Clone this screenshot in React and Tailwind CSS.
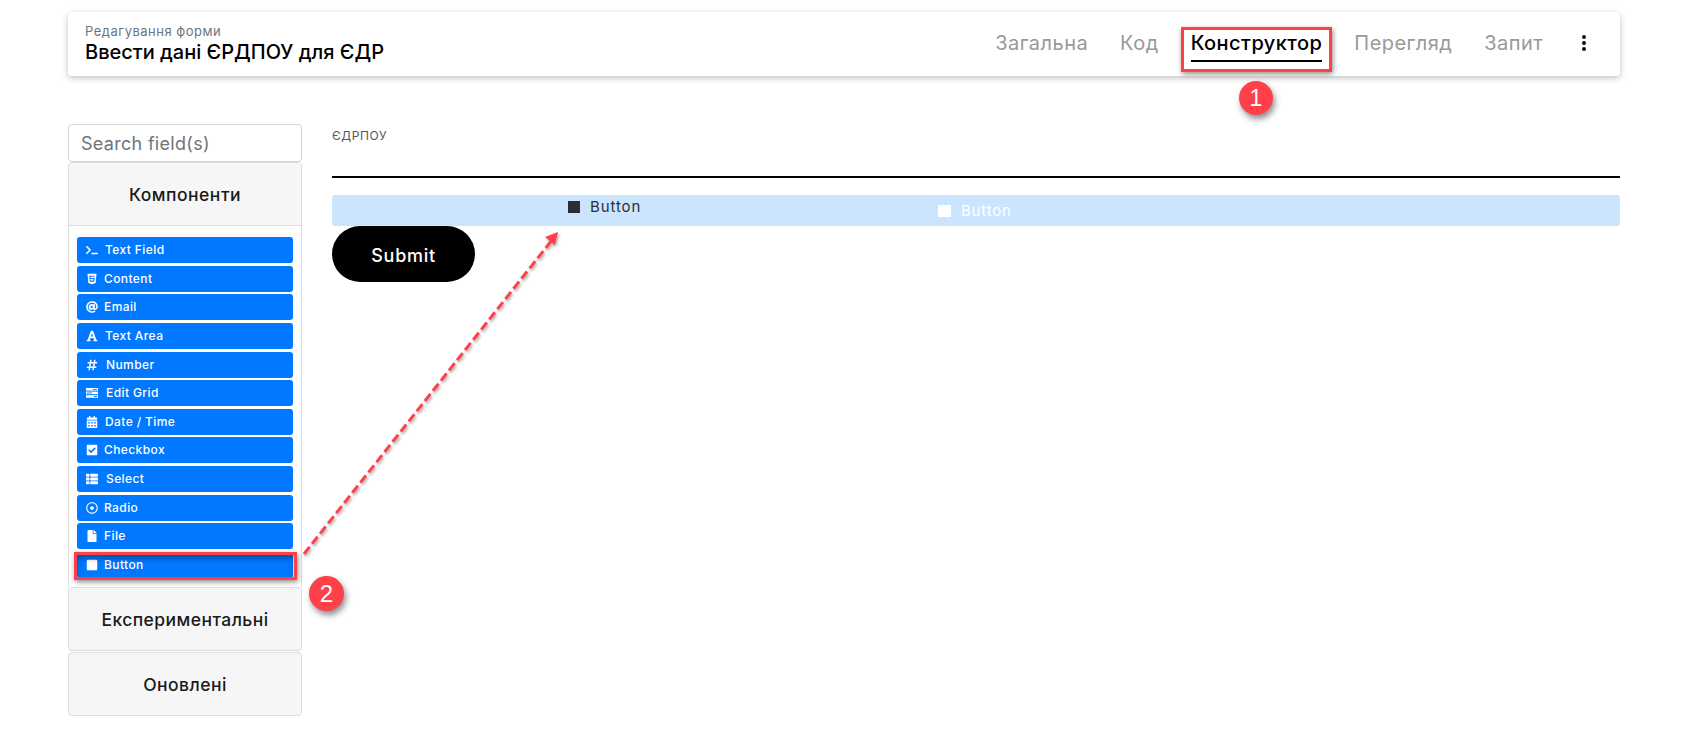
import React from "react";
import { FaTerminal, FaHtml5, FaAt, FaFont, FaHashtag, FaCalendarAlt, FaCheckSquare, FaThList, FaRegDotCircle, FaFile, FaStop } from "react-icons/fa";

function GridIcon() {
  return (
    <svg width="12" height="10" viewBox="0 0 12 10" fill="white">
      <rect x="0" y="0" width="12" height="2.6" />
      <rect x="0" y="3.6" width="12" height="2.6" />
      <rect x="0" y="7.2" width="12" height="2.6" />
      <rect x="7" y="0.9" width="4" height="0.9" fill="#0078ff" />
      <rect x="1" y="4.5" width="5" height="0.9" fill="#0078ff" />
      <rect x="8" y="8.1" width="3" height="0.9" fill="#0078ff" />
    </svg>
  );
}

const items = [
  { label: "Text Field", Icon: FaTerminal, gap: "ml-[7px]" },
  { label: "Content", Icon: FaHtml5, gap: "ml-[6px]" },
  { label: "Email", Icon: FaAt, gap: "ml-[6px]" },
  { label: "Text Area", Icon: FaFont, gap: "ml-[7px]" },
  { label: "Number", Icon: FaHashtag, gap: "ml-[8px]" },
  { label: "Edit Grid", Icon: GridIcon, gap: "ml-[8px]" },
  { label: "Date / Time", Icon: FaCalendarAlt, gap: "ml-[7px]" },
  { label: "Checkbox", Icon: FaCheckSquare, gap: "ml-[6px]" },
  { label: "Select", Icon: FaThList, gap: "ml-[8px]" },
  { label: "Radio", Icon: FaRegDotCircle, gap: "ml-[6px]" },
  { label: "File", Icon: FaFile, gap: "ml-[6px]" },
  { label: "Button", Icon: FaStop, gap: "ml-[6px]" },
];

const tabs = [
  { label: "Загальна" },
  { label: "Код" },
  { label: "Конструктор", active: true },
  { label: "Перегляд" },
  { label: "Запит" },
];

function Badge({ n, className }) {
  return (
    <div className={"absolute flex items-center justify-center rounded-full bg-[#ff4049] text-white font-['Liberation_Sans',sans-serif] shadow-[2px_4px_6px_rgba(0,0,0,0.45)] " + className}>
      {n}
    </div>
  );
}

export default function App() {
  return (
    <div className="relative h-[740px] w-[1687px] overflow-hidden bg-white pl-[68px] pr-[67px] pt-[12px] font-['Inter',sans-serif]">
      <header className="flex h-[64px] justify-between rounded bg-white pl-[17px] pr-[33px] shadow-[0_2px_6px_rgba(0,0,0,0.25)]">
        <div className="pt-[11px]">
          <div className="text-[13px] leading-[16px] tracking-[0.5px] text-[#6c757d]">Редагування форми</div>
          <div className="mt-[1px] text-[20px] leading-[24px] font-medium text-black">Ввести дані ЄРДПОУ для ЄДР</div>
        </div>
        <nav className="flex items-start gap-[32px] pt-[19px] text-[20px] tracking-[0.45px]">
          {tabs.map((t) => (
            <div
              key={t.label}
              className={t.active ? "h-[31px] border-b-2 border-black font-medium leading-[24px] text-black" : "h-[31px] leading-[24px] text-[#999999]"}
            >
              {t.label}
            </div>
          ))}
          <svg width="6" height="16" viewBox="0 0 6 16" className="ml-[6px] mt-[4px]">
            <circle cx="3" cy="2" r="2" fill="#111" />
            <circle cx="3" cy="8" r="2" fill="#111" />
            <circle cx="3" cy="14" r="2" fill="#111" />
          </svg>
        </nav>
      </header>

      <div className="mt-[48px] flex gap-[30px]">
        <aside className="w-[234px] shrink-0">
          <div className="flex h-[38px] items-center rounded border border-[#ced4da] pl-[12px] text-[18px] tracking-[0.3px] text-[#6c757d]">
            Search field(s)
          </div>
          <div className="rounded-t border border-b-0 border-[#dddddd]">
            <div className="flex h-[63px] items-center justify-center border-b border-[#dddddd] bg-[#f6f6f6] pt-[2px] text-[17.5px] font-medium tracking-[0.5px] text-[#1a1a1a]">
              Компоненти
            </div>
            <div className="flex h-[361px] flex-col px-[8px] pt-[11px]">
              {items.map(({ label, Icon, gap }) => (
                <div key={label} className="mb-[2.65px] flex h-[26px] shrink-0 items-center rounded-[3px] bg-[#0078ff] pl-[9px] text-[12px] font-medium tracking-[0.4px] text-white">
                  <span className="flex w-[12px] justify-center text-[12px]"><Icon /></span>
                  <span className={gap}>{label}</span>
                </div>
              ))}
            </div>
          </div>
          <div className="flex h-[64px] items-center justify-center rounded border border-[#dddddd] bg-[#f6f6f6] pt-[2px] text-[17.5px] font-medium tracking-[0.45px] text-[#1a1a1a]">
            Експериментальні
          </div>
          <div className="mt-[1px] flex h-[64px] items-center justify-center rounded border border-[#dddddd] bg-[#f6f6f6] pt-[2px] text-[17.5px] font-medium tracking-[0.45px] text-[#1a1a1a]">
            Оновлені
          </div>
        </aside>

        <main className="min-w-0 flex-1">
          <div className="pt-[5px] text-[12px] leading-[14px] tracking-[0.6px] text-[#555555]">ЄДРПОУ</div>
          <div className="mt-[33px] h-[2px] bg-black" />
          <div className="mt-[17px] flex h-[31px] items-center rounded-[3px] bg-[#cce5ff] pl-[606px] text-[15px] leading-[31px] tracking-[0.8px] text-white">
            <span className="h-[12px] w-[13px] bg-white" />
            <span className="ml-[10px]">Button</span>
          </div>
          <div className="flex h-[56px] w-[143px] items-center justify-center rounded-full bg-black pt-[3px] text-[18px] font-medium tracking-[0.7px] text-white">
            Submit
          </div>
        </main>
      </div>

      {/* drag ghost */}
      <div className="absolute left-[568px] top-[197px] flex h-[20px] items-center text-[15px] tracking-[0.9px] text-[#2b2f33]">
        <span className="h-[12px] w-[12px] bg-[#2b2f33]" />
        <span className="ml-[10px]">Button</span>
      </div>

      {/* annotations */}
      <div className="absolute left-[1181px] top-[27px] h-[45px] w-[151px] border-[3px] border-[#ff4049] shadow-[1px_2px_5px_rgba(0,0,0,0.45)]" />
      <Badge n="1" className="left-[1239px] top-[81px] h-[34px] w-[34px] text-[23px]" />
      <div className="absolute left-[74px] top-[552px] h-[28px] w-[223px] border-[3px] border-[#ff4049] shadow-[1px_2px_5px_rgba(0,0,0,0.45),inset_0_4px_5px_rgba(0,0,0,0.3)]" />
      <Badge n="2" className="left-[309px] top-[576px] h-[35px] w-[35px] text-[24px]" />
      <svg className="absolute left-[295px] top-[225px]" width="275" height="335" viewBox="295 225 275 335">
        <defs>
          <filter id="sh" x="-10%" y="-10%" width="120%" height="120%">
            <feDropShadow dx="1" dy="2" stdDeviation="1.5" floodColor="#000" floodOpacity="0.35" />
          </filter>
        </defs>
        <g filter="url(#sh)">
          <path d="M304 554 L552 240" stroke="#ff4049" strokeWidth="3" strokeDasharray="9 4" fill="none" />
          <path d="M558 232 L555 245 L545 237 Z" fill="#ff4049" />
        </g>
      </svg>
    </div>
  );
}
